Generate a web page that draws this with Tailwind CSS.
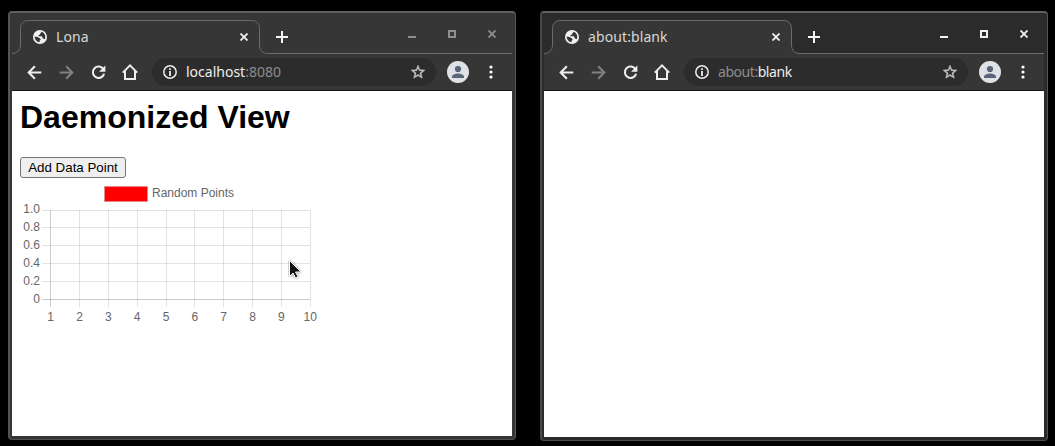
<!DOCTYPE html>
<html lang="en">
<head>
<meta charset="utf-8">
<title>Lona</title>
<script src="https://cdn.jsdelivr.net/npm/@tailwindcss/browser@4"></script>
</head>
<body class="bg-black w-[1055px] h-[446px] overflow-hidden">
<svg class="hidden">
  <symbol id="globe" viewBox="0 0 14 14"><circle cx="7" cy="7" r="7" fill="#f1f1f1"/><path fill="#363636" d="M8.200 1.800C10.500 2.200 12.300 4.300 12.300 6.800c0 .900-.200 1.700-.600 2.400L10 8.400 8.800 6.300H5.500V5l1.700-.500V3.300l1-.500zM1.700 6.600l3 .400 2 1.300 1.100 1.300-1.200 1.100v1.600C4 12.200 1.700 9.800 1.700 6.600z"/></symbol>
  <symbol id="back" viewBox="0 0 16 16"><path d="M15.200 8H2M8.400 1.400 1.800 8l6.600 6.600" fill="none" stroke="currentColor" stroke-width="2.200"/></symbol>
  <symbol id="reload" viewBox="0 0 16 16"><path d="M13.300 4.500A6.100 6.100 0 1 0 14 9.400" fill="none" stroke="currentColor" stroke-width="2.200"/><path d="M15.300 .600v6.700H8.600z" fill="currentColor"/></symbol>
  <symbol id="home" viewBox="0 0 18 18"><path d="M1.800 9.600 9 2.400l7.200 7.200M4 8v8h10V8" fill="none" stroke="currentColor" stroke-width="2"/></symbol>
  <symbol id="info" viewBox="0 0 14 14"><circle cx="7" cy="7" r="6.200" fill="none" stroke="#ececec" stroke-width="1.500"/><path d="M6.100 3.200h1.800v1.700H6.100zM6.100 6h1.800v5H6.100z" fill="#ececec"/></symbol>
  <symbol id="star" viewBox="2 2 20 20"><path fill="#c4c4c4" stroke="#c4c4c4" stroke-width=".6" d="M22 9.240l-7.190-.620L12 2 9.190 8.630 2 9.240l5.460 4.730L5.820 21 12 17.270 18.180 21l-1.630-7.030L22 9.240zM12 15.400l-3.760 2.270 1-4.280-3.320-2.880 4.380-.380L12 6.100l1.710 4.040 4.380.380-3.320 2.880 1 4.280L12 15.400z"/></symbol>
  <symbol id="avatar" viewBox="0 0 22 22"><circle cx="11" cy="11" r="11" fill="#dee1e6"/><circle cx="11" cy="8" r="3.100" fill="#5a6478"/><path d="M5 17v-1.400C5 13.300 9 12.400 11 12.400s6 .900 6 3.200V17z" fill="#5a6478"/></symbol>
  <symbol id="dots" viewBox="0 0 4 14"><g fill="#fff"><circle cx="2" cy="2" r="1.600"/><circle cx="2" cy="7" r="1.600"/><circle cx="2" cy="12" r="1.600"/></g></symbol>
  <symbol id="x" viewBox="0 0 8 8"><path d="M.500.500l7 7M7.500.500l-7 7" fill="none" stroke="currentColor" stroke-width="1.800"/></symbol>
  <symbol id="plus" viewBox="0 0 12 12"><path d="M6 0v12M0 6h12" stroke="#f4f4f4" stroke-width="2"/></symbol>
  <symbol id="tab" viewBox="0 0 500 41"><path d="M0 40.500C5 40.500 8.500 37 8.500 32V15.500C8.500 10.500 11.500 7.500 16.500 7.500H239.500C244.500 7.500 247.500 10.500 247.500 15.500V32C247.500 37 250.500 40.500 256 40.500H500V41H0z" fill="#363636"/><path d="M0 40.500C5 40.500 8.500 37 8.500 32V15.500C8.500 10.500 11.500 7.500 16.500 7.500H239.500C244.500 7.500 247.500 10.500 247.500 15.500V32C247.500 37 250.500 40.500 256 40.500H500" fill="none" stroke="#6c6c6c"/></symbol>
</svg>
<main class="flex items-start gap-6 pl-2 pt-[11px] font-['Noto_Sans',sans-serif]">
  <section class="w-[508px] h-[429px] shrink-0 rounded-[4px] border-t-2 border-l-2 border-r border-b border-t-[#606060] border-l-[#545454] border-r-[#555] border-b-[#4c4c4c] bg-[#363636] pl-[2px] pr-[3px] pb-[3px] flex flex-col">
    <header class="relative h-[41px] shrink-0 flex items-center pl-[21px] pb-0 pt-[7px] text-[#d8d8d8]">
      <svg class="absolute left-0 top-0 w-[500px] h-[41px]"><use href="#tab"/></svg>
      <svg class="relative size-[14px]"><use href="#globe"/></svg>
      <span class="relative ml-[9px] w-[184px] text-[14px] leading-5 tracking-[0.1px]">Lona</span>
      <svg class="relative size-2 text-[#f0f0f0]"><use href="#x"/></svg>
      <svg class="relative ml-[28px] size-3"><use href="#plus"/></svg>
      <div class="relative -mt-[6px] ml-auto mr-[16px] flex items-center gap-8 text-[#8e8e8e]">
        <i class="w-2 h-[2px] bg-current mt-[5px]"></i><i class="size-2 border-2 border-current"></i><svg class="size-2"><use href="#x"/></svg>
      </div>
    </header>
    <nav class="h-[37px] shrink-0 border-b border-[#171717] flex items-center pl-[14px] text-[#eee]">
      <svg class="size-[15px] ml-[.5px]"><use href="#back"/></svg>
      <svg class="size-[15px] ml-[17px] text-[#818181] -scale-x-100"><use href="#back"/></svg>
      <svg class="size-[15px] ml-[17px]"><use href="#reload"/></svg>
      <svg class="size-[18px] ml-[15.5px]"><use href="#home"/></svg>
      <div class="ml-[13px] w-[284px] h-7 rounded-full bg-[#2c2c2c] flex items-center pl-[11px] pr-[11px]">
        <svg class="size-[14px]"><use href="#info"/></svg>
        <span class="ml-[9px] text-[14px] leading-5">localhost<span class="text-[#8c8c8c]">:8080</span></span>
        <svg class="ml-auto size-[14px]"><use href="#star"/></svg>
      </div>
      <svg class="ml-[11px] size-[22px]"><use href="#avatar"/></svg>
      <svg class="ml-[19.5px] w-1 h-[14px]"><use href="#dots"/></svg>
    </nav>
    <div class="relative grow bg-white px-2 pt-2 font-['Liberation_Sans',sans-serif] text-black">
      <h1 class="text-[32px] leading-9 font-bold">Daemonized View</h1>
      <button class="block mt-[22px] h-[21px] w-[106px] rounded-[3px] border border-[#767676] bg-[#efefef] text-[13.333px] leading-[19px] whitespace-nowrap">Add Data Point</button>
      <svg class="block mt-[2px]" width="300" height="150" font-size="12" fill="#666">
        <rect x="84.500" y="6.500" width="43" height="15" fill="#f00" stroke="#e58a8a"/>
        <text x="132" y="17">Random Points</text>
        <g stroke="#000" stroke-opacity=".11">
          <path d="M22 30.500H290M22 47.500H290M22 65.500H290M22 83.500H290M22 101.500H290M59.500 30v97M88.500 30v97M117.500 30v97M146.500 30v97M174.500 30v97M203.500 30v97M232.500 30v97M261.500 30v97M290.500 30v97"/>
          <path stroke-opacity=".2" d="M22 119.500H290M30.500 30v97"/>
        </g>
        <g text-anchor="end"><text x="20" y="33">1.0</text><text x="20" y="51">0.8</text><text x="20" y="69">0.6</text><text x="20" y="87">0.4</text><text x="20" y="105">0.2</text><text x="20" y="123">0</text></g>
        <g text-anchor="middle"><text x="30.500" y="141">1</text><text x="59.500" y="141">2</text><text x="88.300" y="141">3</text><text x="117.200" y="141">4</text><text x="146" y="141">5</text><text x="174.800" y="141">6</text><text x="203.700" y="141">7</text><text x="232.500" y="141">8</text><text x="261.400" y="141">9</text><text x="290.300" y="141">10</text></g>
      </svg>
      <svg class="absolute left-[276px] top-[168px]" width="16" height="22"><path d="M1.500 1.500v16l3.500-3.500 2.500 5 2.500-1.300-2.500-4.700H13z" fill="#111" stroke="#fff" stroke-width="1" style="filter:drop-shadow(0 0 1px #0008)"/></svg>
    </div>
  </section>
  <section class="w-[508px] h-[430px] shrink-0 rounded-[4px] border-t-2 border-l-2 border-r border-b border-t-[#606060] border-l-[#484848] border-r-[#555] border-b-[#4c4c4c] bg-[#2b2b2b] pl-[2px] pr-[3px] pb-[3px] flex flex-col">
    <header class="relative h-[41px] shrink-0 flex items-center pl-[21px] pt-[7px] text-[#d8d8d8]">
      <svg class="absolute left-0 top-0 w-[500px] h-[41px]"><use href="#tab"/></svg>
      <svg class="relative size-[14px]"><use href="#globe"/></svg>
      <span class="relative ml-[9px] w-[184px] text-[14px] leading-5 tracking-[0.1px]">about:blank</span>
      <svg class="relative size-2 text-[#f0f0f0]"><use href="#x"/></svg>
      <svg class="relative ml-[28px] size-3"><use href="#plus"/></svg>
      <div class="relative -mt-[6px] ml-auto mr-[16px] flex items-center gap-8 text-[#f0f0ee]">
        <i class="w-2 h-[2px] bg-current mt-[5px]"></i><i class="size-2 border-2 border-current"></i><svg class="size-2"><use href="#x"/></svg>
      </div>
    </header>
    <nav class="h-[37px] shrink-0 border-b border-[#171717] bg-[#363636] flex items-center pl-[14px] text-[#eee]">
      <svg class="size-[15px] ml-[.5px]"><use href="#back"/></svg>
      <svg class="size-[15px] ml-[17px] text-[#818181] -scale-x-100"><use href="#back"/></svg>
      <svg class="size-[15px] ml-[17px]"><use href="#reload"/></svg>
      <svg class="size-[18px] ml-[15.5px]"><use href="#home"/></svg>
      <div class="ml-[13px] w-[284px] h-7 rounded-full bg-[#2c2c2c] flex items-center pl-[11px] pr-[11px]">
        <svg class="size-[14px]"><use href="#info"/></svg>
        <span class="ml-[9px] text-[14px] leading-5 tracking-[-0.45px]"><span class="text-[#8c8c8c]">about:</span>blank</span>
        <svg class="ml-auto size-[14px]"><use href="#star"/></svg>
      </div>
      <svg class="ml-[11px] size-[22px]"><use href="#avatar"/></svg>
      <svg class="ml-[19.5px] w-1 h-[14px]"><use href="#dots"/></svg>
    </nav>
    <div class="grow bg-white"></div>
  </section>
</main>
</body>
</html>
